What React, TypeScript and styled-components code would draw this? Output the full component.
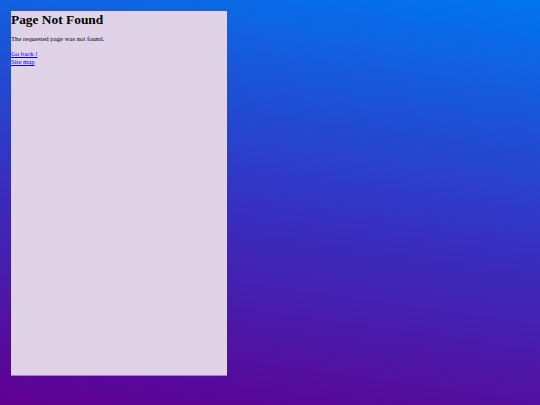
import React from 'react'
import styled, { createGlobalStyle } from 'styled-components'

const GlobalStyle = createGlobalStyle`
  html, body {
    margin: 0;
    height: 100%;
  }
  body {
    background: linear-gradient(188deg, #0076ee 0%, #3532c2 50%, #600090 100%);
    font-family: "Liberation Serif", "Times New Roman", serif;
  }
  #root {
    height: 100%;
  }
`

const Page = styled.div`
  height: 100%;
  padding: 11px;
  box-sizing: border-box;
`

const Panel = styled.div`
  width: 216px;
  height: 365px;
  background: #e1d3e7;
  border-bottom: 1px solid #a27cc6;
  box-sizing: border-box;
`

const Title = styled.h1`
  margin: 0 0 8px;
  padding-top: 1px;
  font-size: 13.4px;
  line-height: 15px;
  font-weight: bold;
  color: #000;
`

const Message = styled.p`
  margin: 0 0 7px;
  font-size: 6.7px;
  line-height: 8px;
  color: #000;
`

const Links = styled.div`
  display: flex;
  flex-direction: column;
  align-items: flex-start;
`

const NavLink = styled.a`
  font-size: 6.7px;
  line-height: 8px;
  color: #0000ee;
  text-decoration: underline;
`

const App: React.FC = () => (
  <>
    <GlobalStyle />
    <Page>
      <Panel>
        <Title>Page Not Found</Title>
        <Message>The requested page was not found.</Message>
        <Links>
          <NavLink href="#">Go back !</NavLink>
          <NavLink href="#">Site map</NavLink>
        </Links>
      </Panel>
    </Page>
  </>
)

export default App
